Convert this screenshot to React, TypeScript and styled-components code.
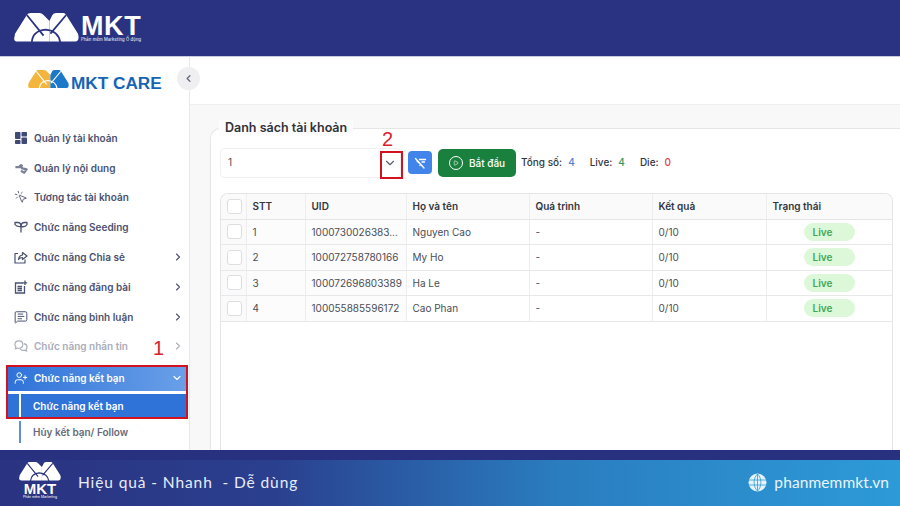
import React from "react";
import styled, { createGlobalStyle } from "styled-components";
import {
  ChevronDown,
  ChevronLeft,
  ChevronRight,
  MessageSquareText,
  MousePointerClick,
  Play,
  UserPlus,
} from "lucide-react";

const GlobalStyle = createGlobalStyle`
  html, body { margin: 0; padding: 0; }
  body { font-family: Inter, "Noto Sans", sans-serif; background: #fff; }
  * { box-sizing: border-box; }
`;

const Page = styled.div`
  position: relative;
  width: 900px;
  height: 506px;
  overflow: hidden;
  display: flex;
  flex-direction: column;
`;

const TopBanner = styled.header`
  height: 57px;
  flex: none;
  background: #2a3381;
  border-bottom: 1px solid #c9cbe4;
  display: flex;
  align-items: flex-start;
  padding: 13px 0 0 14px;
  gap: 2px;
`;

const BrandBlock = styled.div`
  display: flex;
  flex-direction: column;
  color: #fff;
`;

const BrandName = styled.div`
  font-family: "Liberation Sans", sans-serif;
  font-weight: 700;
  font-size: 27px;
  line-height: 22px;
  margin-top: 2px;
  letter-spacing: 0.6px;
`;

const BrandTagline = styled.div`
  font-size: 4.2px;
  line-height: 6px;
  white-space: nowrap;
  letter-spacing: 0.1px;
`;

const Body = styled.div`
  flex: 1;
  display: flex;
  min-height: 0;
`;

const Sidebar = styled.aside`
  width: 190px;
  flex: none;
  background: #fff;
  border-right: 1px solid #e9e9ec;
  display: flex;
  flex-direction: column;
  position: relative;
`;

const CareLogo = styled.div`
  height: 66px;
  flex: none;
  display: flex;
  align-items: flex-start;
  padding: 13px 0 0 28px;
  gap: 2px;
`;

const CareText = styled.span`
  font-family: "Liberation Sans", sans-serif;
  font-weight: 700;
  font-size: 17.2px;
  line-height: 26px;
  color: #1565b4;
  white-space: nowrap;
`;

const CollapseButton = styled.div`
  position: absolute;
  top: 10px;
  right: -11px;
  width: 23px;
  height: 23px;
  border-radius: 50%;
  background: #efeff1;
  color: #666c80;
  display: flex;
  align-items: center;
  justify-content: center;
`;

const Menu = styled.nav`
  display: flex;
  flex-direction: column;
`;

const MenuItem = styled.div<{ $muted?: boolean }>`
  height: 29.8px;
  flex: none;
  display: flex;
  align-items: center;
  padding: 0 5px 0 14px;
  gap: 6px;
  font-size: 10px;
  font-weight: 600;
  white-space: nowrap;
  color: ${(p) => (p.$muted ? "#a9adb9" : "#4a5170")};
`;

const ActiveItem = styled.div`
  height: 26px;
  flex: none;
  margin: 4px 2px 0 7px;
  padding: 0 4px 0 7px;
  display: flex;
  align-items: center;
  gap: 6px;
  font-size: 10px;
  font-weight: 600;
  white-space: nowrap;
  color: #fff;
  background: linear-gradient(90deg, #2f72d8, #6aa0e8);
`;

const MenuLabel = styled.span`
  flex: 1;
`;

const SubMenu = styled.div`
  display: flex;
  flex-direction: column;
  padding-left: 6px;
`;

const SubItem = styled.div<{ $active?: boolean }>`
  height: ${(p) => (p.$active ? 24 : 22)}px;
  margin-top: 3px;
  margin-right: 2px;
  display: flex;
  align-items: center;
  font-size: 10px;
  font-weight: 600;
  color: ${(p) => (p.$active ? "#fff" : "#666b7a")};
  background: ${(p) => (p.$active ? "#2f72d8" : "transparent")};
`;

const SubBar = styled.span<{ $active?: boolean }>`
  width: 2px;
  height: 100%;
  margin: 0 12px 0 13px;
  background: ${(p) => (p.$active ? "#fff" : "#5b8fdc")};
`;

const Content = styled.main`
  flex: 1;
  min-width: 0;
  display: flex;
  flex-direction: column;
  background: #f8f8f8;
`;

const ContentTop = styled.div`
  height: 48px;
  flex: none;
  background: #fff;
  border-bottom: 1px solid #efeff1;
`;

const CardArea = styled.div`
  flex: 1;
  padding: 23px 0 0 20px;
  min-height: 0;
`;

const Card = styled.section`
  position: relative;
  height: 100%;
  background: #fff;
  border: 1px solid #e6e6e8;
  border-right: none;
  border-bottom: none;
  border-top-left-radius: 10px;
  padding: 19px 7px 0 9px;
  display: flex;
  flex-direction: column;
`;

const CardTitle = styled.h2`
  position: absolute;
  top: -9px;
  left: 8px;
  margin: 0;
  padding: 0 6px;
  background: #fcfcfc;
  font-size: 12.5px;
  line-height: 16px;
  font-weight: 600;
  color: #30333b;
`;

const Toolbar = styled.div`
  display: flex;
  align-items: center;
  height: 30px;
  flex: none;
`;

const SelectBox = styled.div`
  width: 181px;
  height: 30px;
  margin-right: 4px;
  background: #fff;
  border: 1px solid #f0f0f2;
  border-radius: 4px;
  padding: 0 3px 2px 7px;
  display: flex;
  align-items: center;
  justify-content: space-between;
  font-size: 10px;
  color: #4a4e58;
`;

const SelectChevron = styled.span`
  display: flex;
  margin-top: 2px;
  color: #5c606b;
`;

const FilterButton = styled.button`
  width: 24px;
  height: 23px;
  margin: -1px 0 0 3px;
  padding: 0;
  border: none;
  border-radius: 4px;
  background: #4285ea;
  color: #fff;
  display: flex;
  align-items: center;
  justify-content: center;
`;

const StartButton = styled.button`
  width: 78px;
  height: 28px;
  margin: -1px 0 0 6px;
  border: none;
  border-radius: 5px;
  background: #19803d;
  color: #fff;
  font-family: inherit;
  font-size: 10px;
  font-weight: 500;
  display: flex;
  align-items: center;
  justify-content: center;
  gap: 6px;
  padding: 0;
`;

const PlayRing = styled.span`
  width: 14px;
  height: 14px;
  border: 1.4px solid #fff;
  border-radius: 50%;
  display: flex;
  align-items: center;
  justify-content: center;
`;

const Stats = styled.div`
  display: flex;
  margin: -2px 0 0 5px;
  font-size: 10px;
  font-weight: 500;
  color: #33363e;
  gap: 15px;
`;

const StatValue = styled.span<{ $color: string }>`
  color: ${(p) => p.$color};
  margin-left: 6px;
`;

const TableWrap = styled.div`
  margin-top: 15px;
  flex: 1;
  border: 1px solid #e5e5e7;
  border-bottom: none;
  border-radius: 8px 8px 0 0;
  overflow: hidden;
  min-height: 0;
`;

const Table = styled.table`
  width: 672px;
  table-layout: fixed;
  border-collapse: collapse;
  font-size: 10px;
  color: #4a4d55;
`;

const HeadCell = styled.th`
  height: 25px;
  padding: 0 6px;
  background: #fafafa;
  border-right: 1px solid #ededef;
  border-bottom: 1px solid #e5e5e7;
  font-weight: 600;
  color: #33363e;
  text-align: left;
  &:last-child { border-right: none; }
`;

const Cell = styled.td`
  height: 25.5px;
  padding: 0 6px;
  border-right: 1px solid #ededef;
  border-bottom: 1px solid #e8e8ea;
  white-space: nowrap;
  overflow: hidden;
  &:last-child { border-right: none; }
`;

const CheckCell = styled(Cell)`
  padding: 0 0 0 6px;
  background: #fafafa;
`;

const HeadCheckCell = styled(HeadCell)`
  padding: 0 0 0 6px;
`;

const StickyCell = styled(Cell)`
  background: #fcfcfc;
`;

const CheckBox = styled.span`
  display: block;
  width: 15px;
  height: 15px;
  background: #fff;
  border: 1px solid #dedee2;
  border-radius: 3px;
`;

const LiveBadge = styled.span`
  display: block;
  width: 51px;
  height: 18px;
  margin-left: 31px;
  border-radius: 9px;
  background: #dcf8d8;
  color: #3fa95b;
  font-size: 10px;
  font-weight: 600;
  line-height: 18px;
  padding-left: 9px;
`;

const BottomBanner = styled.footer`
  height: 56px;
  flex: none;
  border-top: 10px solid #28317f;
  background: linear-gradient(90deg, #2a3381 0%, #2a3f8e 30%, #2a7dbf 62%, #2d9ad8 100%);
  display: flex;
  align-items: center;
  padding: 0 11px 0 18px;
  color: #fff;
`;

const FooterBrand = styled.div`
  width: 44px;
  margin-top: -5px;
  display: flex;
  flex-direction: column;
  align-items: center;
  margin-right: 16px;
`;

const FooterMkt = styled.div`
  font-family: "Liberation Sans", sans-serif;
  font-weight: 700;
  font-size: 15px;
  line-height: 12px;
  margin-top: 1px;
`;

const FooterTiny = styled.div`
  font-size: 3.4px;
  line-height: 4px;
  white-space: nowrap;
`;

const Slogan = styled.div`
  flex: 1;
  font-family: Lato, sans-serif;
  font-size: 15.5px;
  letter-spacing: 0.9px;
  white-space: pre;
  color: #e8edf8;
  margin-top: -2px;
`;

const Website = styled.div`
  display: flex;
  align-items: center;
  gap: 7px;
  font-family: Lato, sans-serif;
  font-size: 15.5px;
  letter-spacing: 0.1px;
  color: #e9f5fc;
  margin-top: -2px;
`;

const RedBox = styled.div<{ $x: number; $y: number; $w: number; $h: number }>`
  position: absolute;
  left: ${(p) => p.$x}px;
  top: ${(p) => p.$y}px;
  width: ${(p) => p.$w}px;
  height: ${(p) => p.$h}px;
  border: 2.5px solid #d2121f;
  pointer-events: none;
`;

const RedNumber = styled.div<{ $x: number; $y: number }>`
  position: absolute;
  left: ${(p) => p.$x}px;
  top: ${(p) => p.$y}px;
  font-family: "Liberation Sans", sans-serif;
  font-size: 20px;
  line-height: 22px;
  color: #d8222c;
`;

const MountainLogo = ({ width, left, right, line }: { width: number; left: string; right: string; line: string }) => (
  <svg width={width} viewBox="0 0 66 30" style={{ flex: "none", display: "block" }}>
    <path d="M1 21 13 2Q14 0 17 0H26Q28 0 30 2L36 8V29H4Q-1 29 .5 24Z" fill={left} />
    <path d="M36 8 39 2Q40 0 43 0H50Q52 0 53 2L65 21Q67 29 62 29H36Z" fill={right} />
    <path d="M13 2 30 23M53 2 37 21" stroke={line} strokeWidth="1.8" fill="none" />
    <path d="M18 30Q19 18 32 17Q45 18 47 30" stroke={line} strokeWidth="1.8" fill="none" />
  </svg>
);

const GridIcon = () => (
  <svg width="14" height="14" viewBox="0 0 14 14" fill="#3f4a78">
    <rect x="1" y="1" width="5.5" height="7" rx="0.8" />
    <rect x="7.5" y="1" width="5.5" height="4.5" rx="0.8" />
    <rect x="1" y="9" width="5.5" height="4" rx="0.8" />
    <rect x="7.5" y="6.5" width="5.5" height="6.5" rx="0.8" />
  </svg>
);

const ContentIcon = () => (
  <svg width="14" height="14" viewBox="0 0 15 14" fill="none" stroke="#7c8296" strokeWidth="2.4" strokeLinejoin="round">
    <path d="M1.5 6H7L9 3.5" />
    <path d="M6 3.5 9 7.5 13.5 8.5 11 12 7.5 10" />
  </svg>
);

const SeedIcon = () => (
  <svg width="14" height="14" viewBox="0 0 14 14" fill="none" stroke="#4a5170" strokeWidth="1.3" strokeLinejoin="round">
    <path d="M1 2.5H4Q7 2.5 7 6.5 2.5 7 1 4.5Z" />
    <path d="M13 2.5H10.5Q7 2.5 7 6.5 11.5 7.5 13 4.5Z" />
    <path d="M7 6.5V12.5" />
  </svg>
);

const ShareIcon = () => (
  <svg width="14" height="14" viewBox="0 0 14 14" fill="none" stroke="#4a5170" strokeWidth="1.2" strokeLinejoin="round">
    <path d="M4 3.5H1V13H11V9.5" />
    <path d="M4.5 9.5Q5 5.5 8.5 5V2.5L13 6 8.5 9.5V7.5Q6 7.5 4.5 9.5Z" />
  </svg>
);

const PostIcon = () => (
  <svg width="14" height="14" viewBox="0 0 14 14" fill="none" stroke="#4a5170" strokeWidth="1.3">
    <path d="M9 3H1.5V13H10.5V6" />
    <path d="M3.5 6.5H8M3.5 8.5H8M3.5 10.5H8" />
    <path d="M11 .5V5M8.8 2.8H13.2" />
  </svg>
);

const ChatIcon = () => (
  <svg width="14" height="14" viewBox="0 0 15 14" fill="none" stroke="#a9adb9" strokeWidth="1.2">
    <path d="M9.5 5.5C9.5 3 7.5 1.5 5.3 1.5S1 3 1 5.500Q1 7 2 8L1.5 10 3.800 9.200C6.500 10 9.500 8.500 9.500 5.500Z" />
    <path d="M10.500 4.500C12.800 5 14 6.300 14 8Q14 9.500 13 10.500L13.500 12.500 11 11.500C9 12 7.300 11.300 6.500 10" />
  </svg>
);

const FilterOffIcon = () => (
  <svg width="14" height="14" viewBox="0 0 14 14" fill="none" stroke="#fff" strokeWidth="1.3" strokeLinecap="round">
    <path d="M2.500 2.500 11 12" />
    <path d="M6.500 3.500H12.500M9 6H11.500M5.500 6.500 4 5M7 9.500V9" />
  </svg>
);

const rows = [
  { stt: 1, uid: "1000730026383...", name: "Nguyen Cao" },
  { stt: 2, uid: "100072758780166", name: "My Ho" },
  { stt: 3, uid: "100072696803389", name: "Ha Le" },
  { stt: 4, uid: "100055885596172", name: "Cao Phan" },
];

const menu = [
  { label: "Quản lý tài khoản", icon: <GridIcon /> },
  { label: "Quản lý nội dung", icon: <ContentIcon /> },
  { label: "Tương tác tài khoản", icon: <MousePointerClick size={14} strokeWidth={1.5} /> },
  { label: "Chức năng Seeding", icon: <SeedIcon /> },
  { label: "Chức năng Chia sẻ", icon: <ShareIcon />, more: true },
  { label: "Chức năng đăng bài", icon: <PostIcon />, more: true },
  { label: "Chức năng bình luận", icon: <MessageSquareText size={14} strokeWidth={1.7} />, more: true },
  { label: "Chức năng nhắn tin", icon: <ChatIcon />, more: true, muted: true },
];

const columns = [25, 59, 101, 123, 123, 114, 127];

const App: React.FC = () => {
  return (
    <Page>
      <GlobalStyle />
      <TopBanner>
        <MountainLogo width={65} left="#fff" right="#fff" line="#2a3381" />
        <BrandBlock>
          <BrandName>MKT</BrandName>
          <BrandTagline>Phần mềm Marketing Ổ động</BrandTagline>
        </BrandBlock>
      </TopBanner>
      <Body>
        <Sidebar>
          <CareLogo>
            <MountainLogo width={41} left="#f4b53c" right="#1c78c8" line="#fff" />
            <CareText>MKT CARE</CareText>
          </CareLogo>
          <CollapseButton>
            <ChevronLeft size={11} strokeWidth={3} />
          </CollapseButton>
          <Menu>
            {menu.map(({ label, icon, more, muted }) => (
              <MenuItem key={label} $muted={muted}>
                {icon}
                <MenuLabel>{label}</MenuLabel>
                {more && <ChevronRight size={12} strokeWidth={2.2} />}
              </MenuItem>
            ))}
            <ActiveItem>
              <UserPlus size={14} strokeWidth={1.7} />
              <MenuLabel>Chức năng kết bạn</MenuLabel>
              <ChevronDown size={12} strokeWidth={2.2} />
            </ActiveItem>
          </Menu>
          <SubMenu>
            <SubItem $active>
              <SubBar $active />
              Chức năng kết bạn
            </SubItem>
            <SubItem>
              <SubBar />
              Hủy kết bạn/ Follow
            </SubItem>
          </SubMenu>
        </Sidebar>
        <Content>
          <ContentTop />
          <CardArea>
            <Card>
              <CardTitle>Danh sách tài khoản</CardTitle>
              <Toolbar>
                <SelectBox>
                  1
                  <SelectChevron>
                    <ChevronDown size={14} strokeWidth={2} />
                  </SelectChevron>
                </SelectBox>
                <FilterButton>
                  <FilterOffIcon />
                </FilterButton>
                <StartButton>
                  <PlayRing>
                    <Play size={6} strokeWidth={2.4} />
                  </PlayRing>
                  Bắt đầu
                </StartButton>
                <Stats>
                  <span>Tổng số:<StatValue $color="#4a7fd8">4</StatValue></span>
                  <span>Live:<StatValue $color="#2f9c63">4</StatValue></span>
                  <span>Die:<StatValue $color="#e0424c">0</StatValue></span>
                </Stats>
              </Toolbar>
              <TableWrap>
                <Table>
                  <colgroup>
                    {columns.map((w, i) => (
                      <col key={i} width={w} />
                    ))}
                  </colgroup>
                  <thead>
                    <tr>
                      <HeadCheckCell><CheckBox /></HeadCheckCell>
                      <HeadCell>STT</HeadCell>
                      <HeadCell>UID</HeadCell>
                      <HeadCell>Họ và tên</HeadCell>
                      <HeadCell>Quá trình</HeadCell>
                      <HeadCell>Kết quả</HeadCell>
                      <HeadCell>Trạng thái</HeadCell>
                    </tr>
                  </thead>
                  <tbody>
                    {rows.map((r) => (
                      <tr key={r.stt}>
                        <CheckCell><CheckBox /></CheckCell>
                        <StickyCell>{r.stt}</StickyCell>
                        <StickyCell>{r.uid}</StickyCell>
                        <Cell>{r.name}</Cell>
                        <Cell>-</Cell>
                        <Cell>0/10</Cell>
                        <Cell><LiveBadge>Live</LiveBadge></Cell>
                      </tr>
                    ))}
                  </tbody>
                </Table>
              </TableWrap>
            </Card>
          </CardArea>
        </Content>
      </Body>
      <BottomBanner>
        <FooterBrand>
          <MountainLogo width={42} left="#fff" right="#fff" line="#2a3381" />
          <FooterMkt>MKT</FooterMkt>
          <FooterTiny>Phần mềm Marketing</FooterTiny>
        </FooterBrand>
        <Slogan>Hiệu quả - Nhanh  - Dễ dùng</Slogan>
        <Website>
          <svg width="19" height="19" viewBox="0 0 19 19">
            <circle cx="9.5" cy="9.5" r="9" fill="#e6f3fb" />
            <path d="M1 7H18M1 12H18M9.5 1V18M9.5 1C5 5 5 14 9.5 18M9.5 1C14 5 14 14 9.5 18" stroke="#2d9ad8" strokeWidth="0.8" fill="none" />
          </svg>
          phanmemmkt.vn
        </Website>
      </BottomBanner>
      <RedBox $x={6} $y={365} $w={182} $h={54} />
      <RedBox $x={380} $y={151} $w={23} $h={28} />
      <RedNumber $x={153} $y={337}>1</RedNumber>
      <RedNumber $x={382} $y={128}>2</RedNumber>
    </Page>
  );
};

export default App;
